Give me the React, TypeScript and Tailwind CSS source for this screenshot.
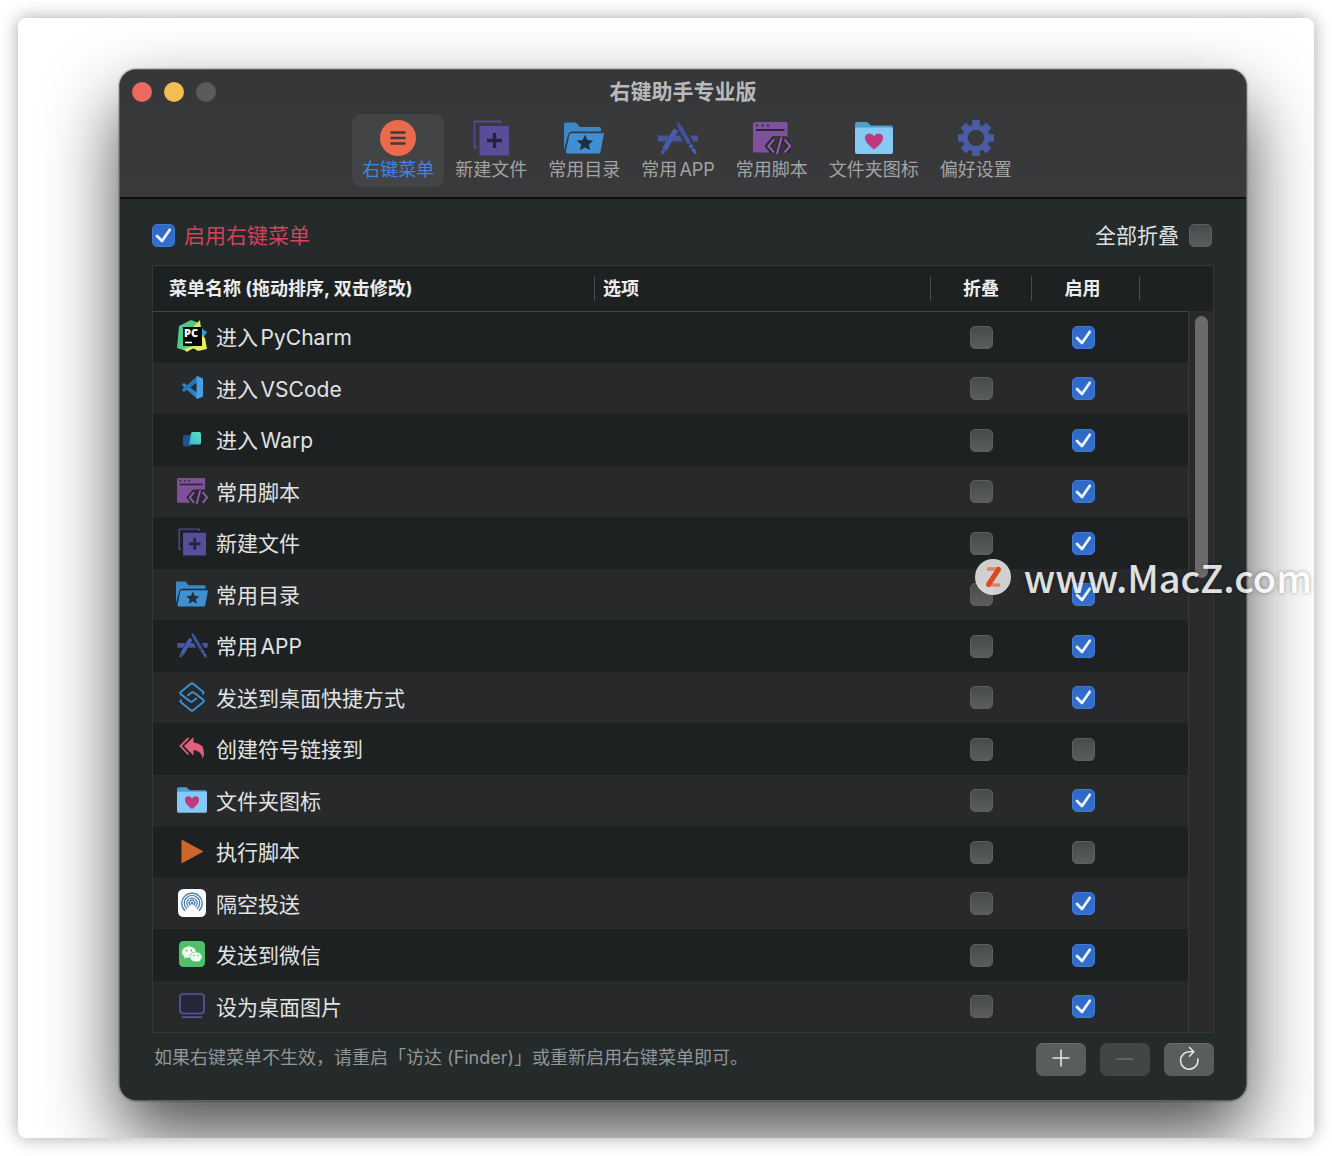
import { useState } from 'react';
import type { ReactNode } from 'react';
import { clsx } from 'clsx';

type IconProps = { className?: string };

function MenuIcon({ className }: IconProps) {
  return (
    <svg viewBox="0 0 36 36" className={className} aria-hidden="true">
      <circle cx="18" cy="18" r="18" fill="#ea6a4b" />
      <path d="M11.5 12.5h13M11.5 18h13M11.5 23.5h13" stroke="#43393a" strokeWidth="2.6" strokeLinecap="round" />
    </svg>
  );
}

function NewFileIcon({ className }: IconProps) {
  return (
    <svg viewBox="0 0 36 36" className={className} aria-hidden="true">
      <path d="M4 27.500H1.500V1.500h26V4" fill="none" stroke="#574a8f" strokeWidth="1.8" strokeLinejoin="round" />
      <rect x="6.500" y="6" width="29.500" height="29.500" rx="1" fill="#574d99" />
      <path d="M21.500 13v15M14 20.500h15" stroke="#24233a" strokeWidth="3.400" />
    </svg>
  );
}

function StarFolderIcon({ className }: IconProps) {
  return (
    <svg viewBox="0 0 40 32" className={className} aria-hidden="true">
      <path d="M0 28V2Q0 .5 1.500 .5H12l4 4.500h19.500Q37 5 37 7v2.500H8Q5 9.500 4.300 12z" fill="#3a88c9" />
      <path d="M7.500 11.200H40L36.500 30q-.3 1.500-2 1.500H3.500q-2 0-1.600-2L5.300 13q.4-1.800 2.200-1.800z" fill="#3f8fd2" />
      <path
        d="M21 12.800l2.400 5.300 5.800.6-4.300 3.900 1.200 5.700-5.100-2.900-5.100 2.900 1.200-5.700-4.300-3.900 5.800-.6z"
        fill="#20303d"
      />
    </svg>
  );
}

function AppIcon({ className }: IconProps) {
  return (
    <svg viewBox="0 0 40 34" className={className} aria-hidden="true">
      <path d="M0 14.500h11L7.600 20.500H0zM17.500 14.500h4l3.500 6H14zM32 14.500h8v6h-4.500z" fill="#46569f" />
      <path d="M15.800 7.500l4.400 2.600L8.300 30.300 3.900 27.700z" fill="#4a5bab" />
      <path d="M3.400 28.600l4.300 2.500L3 34z" fill="#4a5bab" />
      <path d="M19 .5Q22.500 3 25 7.500L33.300 21.800l-3.400 2L21.300 9Q18.600 4.500 19 .5z" fill="#4152a3" />
      <path d="M30.400 24.700l3.400-2 4.200 7.300.5 4-3-2z" fill="#4b5fb5" />
      <path d="M32.500 28.300l3.600-2" stroke="#252b44" strokeWidth="1" />
    </svg>
  );
}

function ScriptIcon({ className }: IconProps) {
  return (
    <svg viewBox="0 0 38 32" className={className} aria-hidden="true">
      <path d="M1.500 0H33q1.500 0 1.500 1.500V14.500L31.500 14h-12l-8 10 5 6.500H1.500Q0 30.500 0 29V1.500Q0 0 1.500 0z" fill="#7f519c" />
      <circle cx="4" cy="3.500" r="1.100" fill="#2c2534" />
      <circle cx="9.500" cy="3.500" r="1.100" fill="#2c2534" />
      <circle cx="15" cy="3.500" r="1.100" fill="#2c2534" />
      <path d="M3 8h28.500" stroke="#2c2534" strokeWidth="2" />
      <g fill="none">
        <path d="M21 17.500l-5.500 6.500 5.500 6.500M31.500 17.500L37 24l-5.500 6.500M28.500 15l-4.500 17" stroke="#2c2534" strokeWidth="5.500" />
        <path d="M21 17.500l-5.500 6.500 5.500 6.500M31.500 17.500L37 24l-5.500 6.500M28.500 15l-4.500 17" stroke="#8a5aa6" strokeWidth="2.400" />
      </g>
    </svg>
  );
}

function HeartFolderIcon({ className }: IconProps) {
  return (
    <svg viewBox="0 0 38 32" className={className} aria-hidden="true">
      <path d="M0 10V2Q0 0 2 0h9q1.500 0 2.500 1.200L16 3.500h20q2 0 2 2V10z" fill="#4d9fd0" />
      <rect y="5.500" width="38" height="26.500" rx="2" fill="#86c9f5" />
      <path
        d="M19 27.500Q10 21 10 16q0-4.300 4.300-4.600 3.200 0 4.700 2.800 1.500-2.800 4.700-2.800 4.300.3 4.300 4.600 0 5-9 11.500z"
        fill="#bd3a80"
      />
    </svg>
  );
}

function GearIcon({ className }: IconProps) {
  return (
    <svg viewBox="0 0 36 36" className={className} aria-hidden="true">
      <g fill="#4b5ba6">
        {[0, 45, 90, 135].map((angle) => (
          <path key={angle} d="M14.200 0h7.600v36h-7.600z" transform={`rotate(${angle} 18 18)`} />
        ))}
        <circle cx="18" cy="18" r="13.500" />
      </g>
      <circle cx="18" cy="18" r="8.200" fill="#38393b" />
    </svg>
  );
}

function PyCharmIcon({ className }: IconProps) {
  return (
    <svg viewBox="0 0 32 32" className={className} aria-hidden="true">
      <path d="M3 6L15 0l8 3 5 8-8 17-10 3-9-3z" fill="#4fc986" />
      <path d="M24 0l-7 7 8 3z" fill="#d9ec55" />
      <path d="M25 8l6 4-4 6-4-4z" fill="#2f9fe0" />
      <path d="M26 15l3 3 2 11-9 2-5-3-6 4-3-3 16-5z" fill="#e6ea5e" />
      <path d="M7 7h19v19H7z" fill="#050505" />
      <text x="8" y="17" fontSize="11" fontWeight="800" fill="#fff" className="font-['Open_Sans',sans-serif]">
        PC
      </text>
      <path d="M9 22.500h7" stroke="#fff" strokeWidth="1.600" />
    </svg>
  );
}

function VSCodeIcon({ className }: IconProps) {
  return (
    <svg viewBox="0 0 24 24" className={className} aria-hidden="true">
      <path d="M1.500 8.500L3 7l14 10.500V24L1.500 10.200q-.8-.8 0-1.700z" fill="#2b83c8" />
      <path d="M1.500 15.500L3 17 17 6.500V0L1.500 13.800q-.8.800 0 1.700z" fill="#2376b8" />
      <path d="M17 0l6 2.600v18.800L17 24l-.8-.8V.8z" fill="#42a0e8" />
    </svg>
  );
}

function WarpIcon({ className }: IconProps) {
  return (
    <svg viewBox="0 0 18 15" className={className} aria-hidden="true">
      <defs>
        <linearGradient id="warp" x1="0" y1="1" x2="1" y2="0">
          <stop offset="0" stopColor="#35b5d6" />
          <stop offset="1" stopColor="#5fe3c4" />
        </linearGradient>
      </defs>
      <path d="M2 3h8L7.500 14.500H2q-2 0-2-2V5q0-2 2-2z" fill="#22548a" />
      <path d="M9.500 0H16q2 0 2 2v8.500q0 2-2 2H6.200L8 1.500Q8.300 0 9.500 0z" fill="url(#warp)" />
    </svg>
  );
}

function ShortcutIcon({ className }: IconProps) {
  const loop = 'M24 11.800q1-1 0-2L14.500 2q-1.500-1.200-3 0L2 9.800q-1.500 1.300 0 2.600L10.500 19q1.800 1.300 3.600 0L17 16.700';
  return (
    <svg viewBox="0 0 26 30" className={className} aria-hidden="true">
      <g fill="none" stroke="#3b8fd0" strokeWidth="2" strokeLinejoin="round" strokeLinecap="round">
        <path d={loop} />
        <path d={loop} transform="rotate(180 13 15)" />
      </g>
    </svg>
  );
}

function ReplyAllIcon({ className }: IconProps) {
  return (
    <svg viewBox="0 0 26 22" className={className} aria-hidden="true">
      <path d="M14.500 0v5.500Q25 6 25 16.500q0 2.500-1.500 5Q23 14 14.500 13v5.500L5 9z" fill="#e0607f" />
      <path d="M9.500 1L1.500 9l8 8.500" fill="none" stroke="#e0607f" strokeWidth="1.800" />
    </svg>
  );
}

function PlayIcon({ className }: IconProps) {
  return (
    <svg viewBox="0 0 23 25" className={className} aria-hidden="true">
      <path d="M.5.500L22.500 12.500.500 24.500z" fill="#cd672b" />
    </svg>
  );
}

function AirDropIcon({ className }: IconProps) {
  return (
    <svg viewBox="0 0 28 28" className={className} aria-hidden="true">
      <rect width="28" height="28" rx="5.500" fill="#fbfcfd" />
      <g fill="none" stroke="#4079ad" strokeWidth="1.200" strokeLinecap="round">
        <path d="M6.800 21.500a10.200 10.200 0 1 1 14.400 0" />
        <path d="M8.600 19.700a7.700 7.700 0 1 1 10.800 0" />
        <path d="M10.300 17.900a5.200 5.200 0 1 1 7.400 0" />
        <path d="M12 16a2.800 2.800 0 1 1 4 0" />
      </g>
      <circle cx="14" cy="14.200" r="1.300" fill="#4079ad" />
    </svg>
  );
}

function WeChatIcon({ className }: IconProps) {
  return (
    <svg viewBox="0 0 26 26" className={className} aria-hidden="true">
      <rect width="26" height="26" rx="4.500" fill="#4fbf69" />
      <path d="M10 5.500c-4 0-7 2.500-7 5.700 0 1.900 1 3.400 2.600 4.500l-.6 2 2.400-1.200q1.300.4 2.600.4c4 0 7-2.500 7-5.700s-3-5.700-7-5.700z" fill="#f2fbf4" />
      <path
        d="M17 11c-3.500 0-6.200 2.200-6.200 4.900s2.700 4.900 6.200 4.900q1 0 2-.3l2.200 1.100-.5-1.900c1.500-.9 2.400-2.300 2.400-3.800 0-2.700-2.700-4.900-6.100-4.900z"
        fill="#f2fbf4"
        stroke="#4fbf69"
        strokeWidth=".700"
      />
      <g fill="#4fbf69">
        <circle cx="7.500" cy="9.500" r=".9" />
        <circle cx="12.300" cy="9.500" r=".9" />
        <circle cx="15" cy="14.500" r=".8" />
        <circle cx="19.200" cy="14.500" r=".8" />
      </g>
    </svg>
  );
}

function DesktopIcon({ className }: IconProps) {
  return (
    <svg viewBox="0 0 26 26" className={className} aria-hidden="true">
      <rect x="1" y="1" width="24" height="19.500" rx="3" fill="#242838" stroke="#5a559a" strokeWidth="1.700" />
      <path d="M3.500 24.200h19" stroke="#5a559a" strokeWidth="1.700" strokeLinecap="round" />
    </svg>
  );
}

const tabs = [
  { id: 'menu', label: '右键菜单', icon: <MenuIcon className="size-9" /> },
  { id: 'new-file', label: '新建文件', icon: <NewFileIcon className="size-9" /> },
  { id: 'folders', label: '常用目录', icon: <StarFolderIcon className="h-8 w-10" /> },
  { id: 'apps', label: '常用APP', icon: <AppIcon className="h-[34px] w-10" /> },
  { id: 'scripts', label: '常用脚本', icon: <ScriptIcon className="h-8 w-[38px]" /> },
  { id: 'folder-icons', label: '文件夹图标', icon: <HeartFolderIcon className="h-8 w-[38px]" /> },
  { id: 'settings', label: '偏好设置', icon: <GearIcon className="size-9" /> },
];

type MenuItem = {
  name: string;
  icon: ReactNode;
  enabled: boolean;
};

const menuItems: MenuItem[] = [
  { name: '进入PyCharm', icon: <PyCharmIcon className="size-8" />, enabled: true },
  { name: '进入VSCode', icon: <VSCodeIcon className="size-[23px]" />, enabled: true },
  { name: '进入Warp', icon: <WarpIcon className="h-[15px] w-[18px]" />, enabled: true },
  { name: '常用脚本', icon: <ScriptIcon className="h-[26px] w-[31px]" />, enabled: true },
  { name: '新建文件', icon: <NewFileIcon className="size-7" />, enabled: true },
  { name: '常用目录', icon: <StarFolderIcon className="h-[26px] w-8" />, enabled: true },
  { name: '常用APP', icon: <AppIcon className="h-[26px] w-[31px]" />, enabled: true },
  { name: '发送到桌面快捷方式', icon: <ShortcutIcon className="h-[30px] w-[26px]" />, enabled: true },
  { name: '创建符号链接到', icon: <ReplyAllIcon className="h-[22px] w-[26px]" />, enabled: false },
  { name: '文件夹图标', icon: <HeartFolderIcon className="h-[26px] w-[30px]" />, enabled: true },
  { name: '执行脚本', icon: <PlayIcon className="h-[25px] w-[23px]" />, enabled: false },
  { name: '隔空投送', icon: <AirDropIcon className="size-7" />, enabled: true },
  { name: '发送到微信', icon: <WeChatIcon className="size-[26px]" />, enabled: true },
  { name: '设为桌面图片', icon: <DesktopIcon className="size-[26px]" />, enabled: true },
];

type CheckboxProps = {
  id?: string;
  label?: string;
  defaultChecked?: boolean;
};

function Checkbox({ id, label, defaultChecked }: CheckboxProps) {
  return (
    <span className="inline-grid size-[23px] shrink-0 align-middle">
      <input
        id={id}
        type="checkbox"
        aria-label={label}
        defaultChecked={defaultChecked}
        className="peer col-start-1 row-start-1 size-[23px] appearance-none rounded-[5px] border border-[#5c5e5f] bg-linear-to-b from-[#484b4b] to-[#5b5d5d] checked:border-[#3f7ad6] checked:from-[#3068c8] checked:to-[#346fcd]"
      />
      <svg
        viewBox="0 0 23 23"
        className="pointer-events-none invisible col-start-1 row-start-1 size-[23px] peer-checked:visible"
        aria-hidden="true"
      >
        <path
          d="M5 12l5 5L17.800 5.800"
          fill="none"
          stroke="#e9f4ff"
          strokeWidth="2.800"
          strokeLinecap="round"
          strokeLinejoin="round"
        />
      </svg>
    </span>
  );
}

function Toolbar() {
  const [active, setActive] = useState('menu');

  return (
    <header className="border-b-2 border-[#0c0e0e] bg-linear-to-b from-[#363738] to-[#3a3a3c] pb-[10px]">
      <div className="grid h-11 grid-cols-[1fr_auto_1fr] items-center px-3">
        <div className="flex gap-3">
          <button type="button" aria-label="关闭" className="size-5 rounded-full bg-[#ec695e]" />
          <button type="button" aria-label="最小化" className="size-5 rounded-full bg-[#f4bd4f]" />
          <button type="button" aria-label="缩放" className="size-5 rounded-full bg-[#5a5b5d]" disabled />
        </div>
        <h1 className="text-[21px] font-bold text-[#b9babb]">右键助手专业版</h1>
      </div>
      <nav className="flex justify-center gap-px pl-2">
        {tabs.map((tab) => (
          <button
            key={tab.id}
            type="button"
            onClick={() => setActive(tab.id)}
            aria-pressed={active === tab.id}
            className={clsx(
              'flex h-[73px] flex-col items-center gap-0.5 rounded-[9px] px-[10px] pt-1.5 text-[18px]/6',
              active === tab.id ? 'bg-[#434446] text-[#3f84e4]' : 'text-[#a2a3a4]',
            )}
          >
            <span className="flex h-9 items-center">{tab.icon}</span>
            {tab.label}
          </button>
        ))}
      </nav>
    </header>
  );
}

function MenuTable() {
  return (
    <div className="relative border border-[#323738] bg-[#1d2122]">
      <table className="w-full table-fixed border-collapse">
        <colgroup>
          <col className="w-[442px]" />
          <col />
          <col className="w-[101px]" />
          <col className="w-[108px]" />
          <col className="w-[73px]" />
        </colgroup>
        <thead className="text-[18px]/[25px] font-bold text-[#ededed]">
          <tr className="h-[45px] border-b border-[#3f4445]">
            <th scope="col" className="p-0 text-left">
              <div className="border-r border-[#484c4d] pl-4">菜单名称 (拖动排序, 双击修改)</div>
            </th>
            <th scope="col" className="p-0 text-left">
              <div className="border-r border-[#484c4d] pl-2">选项</div>
            </th>
            <th scope="col" className="p-0">
              <div className="border-r border-[#484c4d]">折叠</div>
            </th>
            <th scope="col" className="p-0">
              <div className="border-r border-[#484c4d] pr-1.5">启用</div>
            </th>
            <td />
          </tr>
        </thead>
        <tbody className="text-[21px]/[30px] text-[#e2e3e3]">
          {menuItems.map((item) => (
            <tr key={item.name} className="odd:h-[52px] even:h-[51px] even:bg-[#27292b]">
              <td className="p-0 pl-[23px]">
                <div className="flex items-center gap-2">
                  <span className="flex w-8 shrink-0 justify-center pb-0.5">{item.icon}</span>
                  <span className="pt-0.5">{item.name}</span>
                </div>
              </td>
              <td />
              <td className="p-0 text-center leading-none">
                <Checkbox label={`折叠 ${item.name}`} />
              </td>
              <td className="p-0 pr-1.5 text-center leading-none">
                <Checkbox label={`启用 ${item.name}`} defaultChecked={item.enabled} />
              </td>
              <td />
            </tr>
          ))}
        </tbody>
      </table>
      <div className="absolute top-[45px] right-0 bottom-0 w-[25px] border-l border-[#383b3c] bg-[#2a2a2a] pt-[5px] pl-1.5">
        <div className="h-[262px] w-[13px] rounded-full bg-[#6b6b6b]" />
      </div>
    </div>
  );
}

const footerButton = 'flex h-[33px] w-[50px] items-center justify-center rounded-[7px]';

function Footer() {
  return (
    <footer className="flex items-start justify-between pt-[10px]">
      <p className="pl-0.5 text-[18px]/[30px] text-[#939697]">
        {'如果右键菜单不生效\uff0c请重启「访达 (Finder)」或重新启用右键菜单即可。'}
      </p>
      <div className="flex gap-[14px]">
        <button type="button" aria-label="添加" className={clsx(footerButton, 'border-t border-[#6d7071] bg-[#5a5d5e]')}>
          <svg viewBox="0 0 18 18" className="mb-1 size-[18px]" aria-hidden="true">
            <path d="M9 .5v17M.5 9h17" stroke="#e4e5e5" strokeWidth="1.600" />
          </svg>
        </button>
        <button type="button" aria-label="删除" disabled className={clsx(footerButton, 'bg-[#414646]')}>
          <svg viewBox="0 0 18 18" className="mb-0.5 size-[18px]" aria-hidden="true">
            <path d="M.5 9h17" stroke="#6d7172" strokeWidth="1.600" />
          </svg>
        </button>
        <button type="button" aria-label="刷新" className={clsx(footerButton, 'border-t border-[#6d7071] bg-[#5a5d5e]')}>
          <svg viewBox="0 0 20 24" className="mb-1 h-6 w-5" aria-hidden="true">
            <g fill="none" stroke="#e4e5e5" strokeWidth="1.600" strokeLinecap="round" strokeLinejoin="round">
              <path d="M18.800 13A8.700 8.700 0 1 1 10.500 5.800h4" />
              <path d="M10.500 1.500l4.300 4.300-4.300 4.400" />
            </g>
          </svg>
        </button>
      </div>
    </footer>
  );
}

function Watermark() {
  return (
    <div className="pointer-events-none absolute top-[532px] right-0.5 flex items-center gap-[13px] opacity-85">
      <svg viewBox="0 0 36 36" className="size-9" aria-hidden="true">
        <circle cx="18" cy="18" r="18" fill="#eeeeee" />
        <path d="M12 10h13" stroke="#f79a78" strokeWidth="3.500" />
        <path d="M12 26h13" stroke="#f79a78" strokeWidth="3.500" />
        <path d="M23.500 10.500L13.500 25.500" stroke="#f4511e" strokeWidth="5" strokeLinecap="round" />
      </svg>
      <span className="font-['Noto_Sans_CJK_SC',sans-serif] text-[38px]/[54px] font-medium text-white [text-shadow:0_0_4px_rgba(0,0,0,0.4)]">
        www.MacZ.com
      </span>
    </div>
  );
}

export default function App() {
  return (
    <div className="min-h-screen bg-white p-[18px] font-[Inter,'Noto_Sans_CJK_SC',sans-serif] [text-autospace:normal]">
      <main className="relative overflow-hidden rounded-[8px] bg-white pt-[51px] pr-[67px] pb-[37px] pl-[101px] shadow-[0_0_18px_rgba(0,0,0,0.35)]">
        <div className="rounded-[17px] shadow-[0_34px_72px_rgba(0,0,0,0.7),0_0_2px_rgba(0,0,0,0.6)]">
          <div className="overflow-hidden rounded-[17px] border border-[#5d6061] bg-[#252a2b]">
            <Toolbar />
            <div className="px-8 pt-6 pb-6">
              <div className="mb-[18px] flex items-center justify-between text-[21px]/[26px]">
                <div className="flex items-center gap-[9px]">
                  <Checkbox id="enable-menu" defaultChecked />
                  <label htmlFor="enable-menu" className="-mb-0.5 text-[#d3435b]">
                    启用右键菜单
                  </label>
                </div>
                <div className="flex items-center gap-[10px] pr-0.5">
                  <label htmlFor="fold-all" className="-mb-0.5 text-[#dfe0e0]">
                    全部折叠
                  </label>
                  <Checkbox id="fold-all" />
                </div>
              </div>
              <MenuTable />
              <Footer />
            </div>
          </div>
        </div>
        <Watermark />
      </main>
    </div>
  );
}
